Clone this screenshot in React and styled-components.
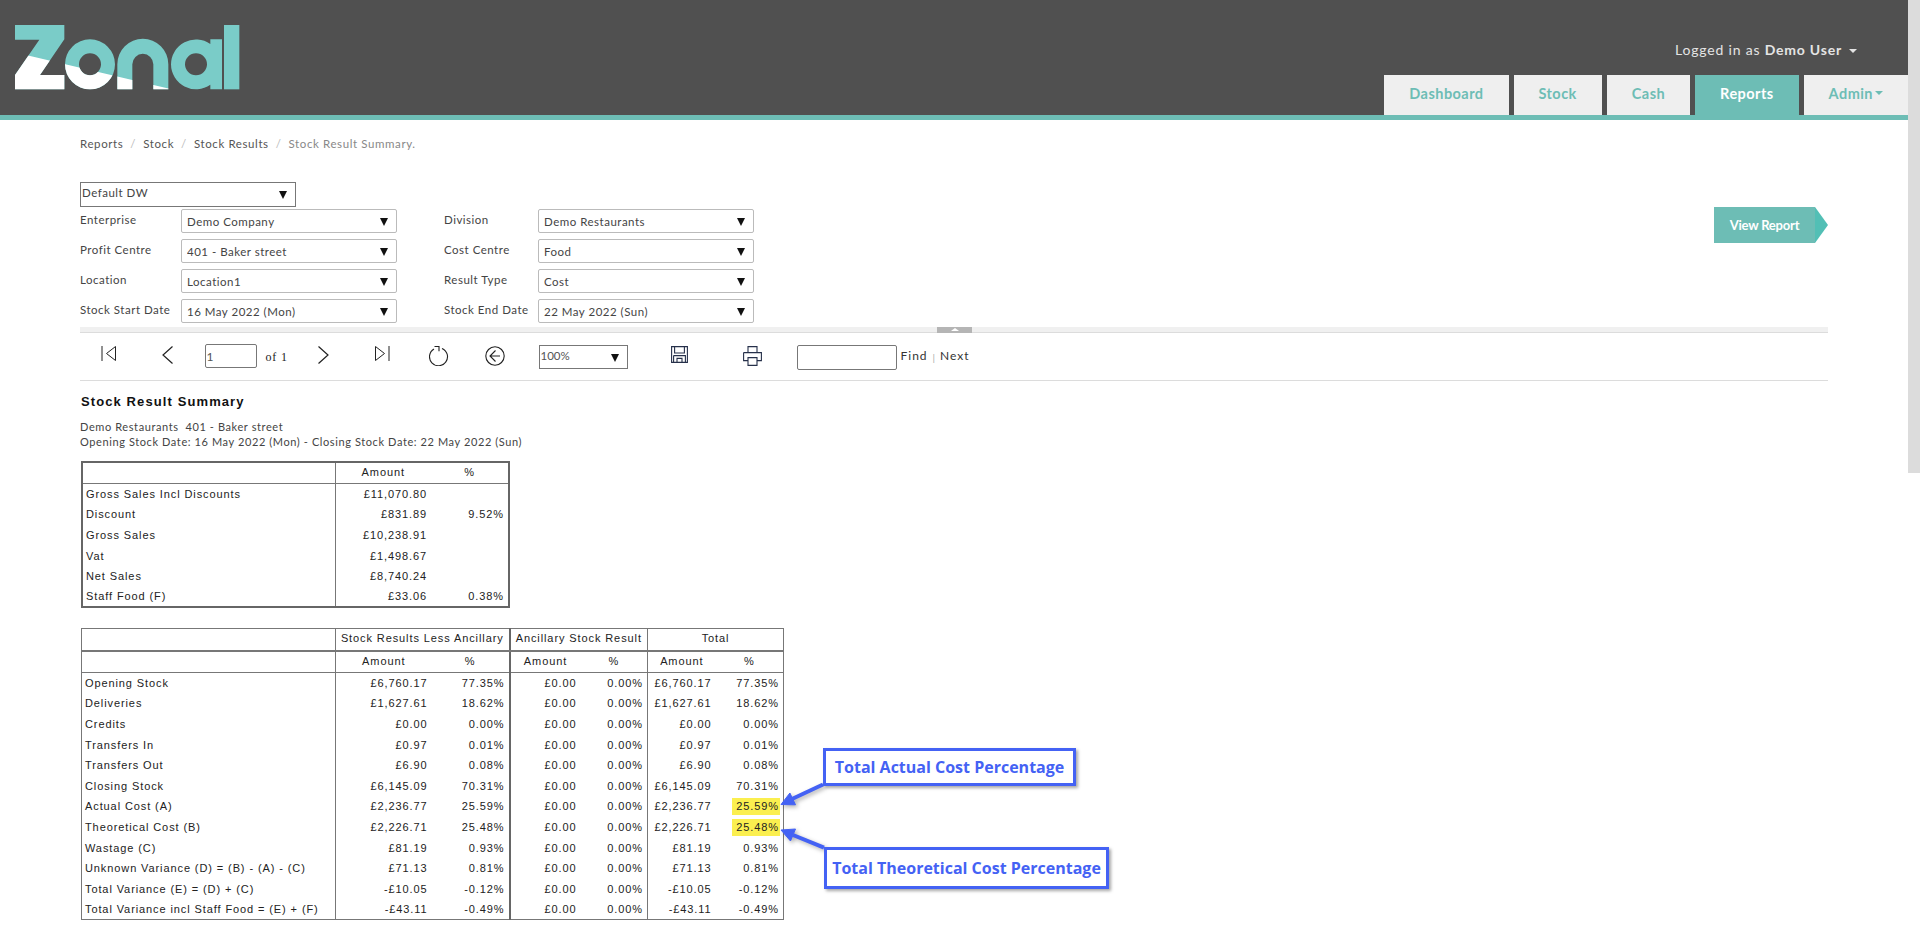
import React from "react";
import styled, { createGlobalStyle } from "styled-components";

const teal = "#6dbdb5";
const callout = "#4462f4";

const GlobalStyle = createGlobalStyle`
  html, body {
    margin: 0;
    height: 100%;
    overflow: hidden;
    background: #fff;
  }
  body {
    font-family: Lato, "Open Sans", sans-serif;
    color: #444;
  }
  #root {
    height: 100%;
  }
`;

const filterRows = [
  ["Enterprise", "Demo Company", "Division", "Demo Restaurants"],
  ["Profit Centre", "401 - Baker street", "Cost Centre", "Food"],
  ["Location", "Location1", "Result Type", "Cost"],
  ["Stock Start Date", "16 May 2022 (Mon)", "Stock End Date", "22 May 2022 (Sun)"],
];

const salesRows = [
  ["Gross Sales Incl Discounts", "£11,070.80", ""],
  ["Discount", "£831.89", "9.52%"],
  ["Gross Sales", "£10,238.91", ""],
  ["Vat", "£1,498.67", ""],
  ["Net Sales", "£8,740.24", ""],
  ["Staff Food (F)", "£33.06", "0.38%"],
];

const stockRows = [
  ["Opening Stock", "£6,760.17", "77.35%"],
  ["Deliveries", "£1,627.61", "18.62%"],
  ["Credits", "£0.00", "0.00%"],
  ["Transfers In", "£0.97", "0.01%"],
  ["Transfers Out", "£6.90", "0.08%"],
  ["Closing Stock", "£6,145.09", "70.31%"],
  ["Actual Cost (A)", "£2,236.77", "25.59%", true],
  ["Theoretical Cost (B)", "£2,226.71", "25.48%", true],
  ["Wastage (C)", "£81.19", "0.93%"],
  ["Unknown Variance (D) = (B) - (A) - (C)", "£71.13", "0.81%"],
  ["Total Variance (E) = (D) + (C)", "-£10.05", "-0.12%"],
  ["Total Variance incl Staff Food = (E) + (F)", "-£43.11", "-0.49%"],
];

function Logo() {
  const shapes = (
    <>
      <polygon points="15,15 163,15 163,58 90,165 163,165 163,208 15,208 15,165 88,59 15,59" />
      <path fillRule="evenodd" d="M165,133a75,75 0 1 0 150,0a75,75 0 1 0 -150,0zM207,133a33,33 0 1 1 66,0a33,33 0 1 1 -66,0z" />
      <path d="M322,208V133A76,76 0 0 1 475,133V208H430V133A31,31 0 0 0 367,133V208Z" />
      <path fillRule="evenodd" d="M483,133a75,75 0 0 1 118,-61V58H636V208H601V194A75,75 0 0 1 483,133zM525,133a33,33 0 1 0 66,0a33,33 0 1 0 -66,0z" />
      <rect x="642" y="15" width="46" height="193" />
    </>
  );
  return (
    <LogoMark viewBox="0 0 720 225" role="img" aria-label="Zonal">
      <defs>
        <clipPath id="logo-lower">
          <polygon points="0,94 720,263 720,225 0,225" />
        </clipPath>
      </defs>
      <g fill="#7accc8">{shapes}</g>
      <g fill="#fff" clipPath="url(#logo-lower)">{shapes}</g>
    </LogoMark>
  );
}

function FirstIcon() {
  return (
    <svg width="15" height="15" viewBox="0 0 15 15" fill="none" stroke="#222" strokeWidth="1">
      <path d="M1 0v15M14.5 .5L5.5 7.5l9 7z" />
    </svg>
  );
}

function LastIcon() {
  return (
    <svg width="15" height="15" viewBox="0 0 15 15" fill="none" stroke="#222" strokeWidth="1">
      <path d="M14 0v15M.5 .5l9 7-9 7z" />
    </svg>
  );
}

function PrevIcon() {
  return (
    <svg width="11" height="18" viewBox="0 0 11 18" fill="none" stroke="#222" strokeWidth="1.2">
      <path d="M10.5 .5L1 9l9.5 8.5" />
    </svg>
  );
}

function NextIcon() {
  return (
    <svg width="11" height="18" viewBox="0 0 11 18" fill="none" stroke="#222" strokeWidth="1.2">
      <path d="M.5 .5L10 9 .5 17.5" />
    </svg>
  );
}

function RefreshIcon() {
  return (
    <svg width="20" height="20" viewBox="0 0 20 20" fill="none" stroke="#222" strokeWidth="1.1">
      <path d="M13 2.4A9 9 0 1 1 5 2.9" />
      <path d="M5.5 .5h4.5v4.8" />
    </svg>
  );
}

function BackIcon() {
  return (
    <svg width="20" height="20" viewBox="0 0 20 20" fill="none" stroke="#222" strokeWidth="1.1">
      <circle cx="10" cy="10" r="9.2" />
      <path d="M10.5 4.5L5 10l5.5 5.5M5 10h10" />
    </svg>
  );
}

function SaveIcon() {
  return (
    <svg width="17" height="17" viewBox="0 0 17 17" fill="none" stroke="#26304a" strokeWidth="1.1">
      <path d="M.6 .6h15.8v15.8H.6z" />
      <path d="M3.6 .6v6.4h9.8V.6M2.6 9.6h11.8v6.8M2.6 9.6v6.8M6 16.4v-4h5v4" />
    </svg>
  );
}

function PrintIcon() {
  return (
    <svg width="19" height="20" viewBox="0 0 19 20" fill="none" stroke="#26304a" strokeWidth="1.1">
      <path d="M5 .6h9v6H5zM.6 6.6h17.8v8H14M5 14.6H.6v-8" />
      <path d="M5 11.6h9v7.8H5z" />
    </svg>
  );
}

function CalloutArrows() {
  return (
    <ArrowLayer width="50" height="75" viewBox="0 0 50 75">
      <g fill={callout} stroke={callout}>
        <line x1="45" y1="3.5" x2="14" y2="18" strokeWidth="4" />
        <polygon points="3,23.5 17.5,23.8 11.9,12" strokeWidth="1" />
        <line x1="46" y1="66.7" x2="15" y2="54" strokeWidth="4" />
        <polygon points="3,49 12.5,60 17.5,48" strokeWidth="1" />
      </g>
    </ArrowLayer>
  );
}

function Dropdown({ value, $dark }) {
  return (
    <SelectWrap>
      <Select $dark={$dark} defaultValue={value}>
        <option>{value}</option>
      </Select>
    </SelectWrap>
  );
}

export default function App() {
  return (
    <Shell>
      <GlobalStyle />
      <Page>
        <Header>
          <Logo />
          <HeaderRight>
            <UserMenu>
              Logged in as <strong>Demo User</strong>
              <Caret $spaced />
            </UserMenu>
            <Tabs>
              <Tab>Dashboard</Tab>
              <Tab>Stock</Tab>
              <Tab>Cash</Tab>
              <Tab $active>Reports</Tab>
              <Tab>
                Admin
                <Caret $teal />
              </Tab>
            </Tabs>
          </HeaderRight>
        </Header>

        <Content>
          <Breadcrumb>
            <a>Reports</a>
            <Slash>/</Slash>
            <a>Stock</a>
            <Slash>/</Slash>
            <a>Stock Results</a>
            <Slash>/</Slash>
            <Current>Stock Result Summary.</Current>
          </Breadcrumb>

          <FilterSection>
            <div>
              <Dropdown value="Default DW" $dark />
              <FilterGrid>
                {filterRows.map((row) => (
                  <React.Fragment key={row[0]}>
                    <FilterLabel>{row[0]}</FilterLabel>
                    <Dropdown value={row[1]} />
                    <FilterLabel $second>{row[2]}</FilterLabel>
                    <Dropdown value={row[3]} />
                  </React.Fragment>
                ))}
              </FilterGrid>
            </div>
            <ViewReport>View Report</ViewReport>
          </FilterSection>

          <CollapseBar>
            <CollapseHandle />
          </CollapseBar>

          <Toolbar>
            <Tool $left={21}><FirstIcon /></Tool>
            <Tool $left={46}><PrevIcon /></Tool>
            <PageInput defaultValue="1" />
            <PageCount>of 1</PageCount>
            <Tool $left={29}><NextIcon /></Tool>
            <Tool $left={46}><LastIcon /></Tool>
            <Tool $left={39}><RefreshIcon /></Tool>
            <Tool $left={36}><BackIcon /></Tool>
            <ZoomWrap>
              <ZoomSelect defaultValue="100%">
                <option>100%</option>
              </ZoomSelect>
            </ZoomWrap>
            <Tool $left={43}><SaveIcon /></Tool>
            <Tool $left={55}><PrintIcon /></Tool>
            <FindInput />
            <FindLink $left={4}>Find</FindLink>
            <FindDivider>|</FindDivider>
            <FindLink $left={0}>Next</FindLink>
          </Toolbar>

          <ReportTitle>Stock Result Summary</ReportTitle>
          <ReportMeta>
            Demo Restaurants &nbsp;401 - Baker street
            <br />
            Opening Stock Date: 16 May 2022 (Mon) - Closing Stock Date: 22 May 2022 (Sun)
          </ReportMeta>

          <SalesTable>
            <colgroup>
              <col width="253" />
              <col width="96" />
              <col width="78" />
            </colgroup>
            <thead>
              <tr>
                <HeadCell />
                <HeadCell $noRule>Amount</HeadCell>
                <HeadCell $plain>%</HeadCell>
              </tr>
            </thead>
            <tbody>
              {salesRows.map((row) => (
                <tr key={row[0]}>
                  <LabelCell>{row[0]}</LabelCell>
                  <ValueCell $noRule>{row[1]}</ValueCell>
                  <ValueCell $plain>{row[2]}</ValueCell>
                </tr>
              ))}
            </tbody>
          </SalesTable>

          <StockWrap>
            <StockTable>
              <colgroup>
                <col width="254" />
                <col width="96" />
                <col width="78" />
                <col width="71" />
                <col width="67" />
                <col width="68" />
                <col width="68" />
              </colgroup>
              <thead>
                <tr>
                  <GroupCell />
                  <GroupCell colSpan={2} $heavy>Stock Results Less Ancillary</GroupCell>
                  <GroupCell colSpan={2}>Ancillary Stock Result</GroupCell>
                  <GroupCell colSpan={2}>Total</GroupCell>
                </tr>
                <tr>
                  <HeadCell />
                  <HeadCell $noRule>Amount</HeadCell>
                  <HeadCell $heavy>%</HeadCell>
                  <HeadCell $noRule>Amount</HeadCell>
                  <HeadCell>%</HeadCell>
                  <HeadCell $noRule>Amount</HeadCell>
                  <HeadCell $plain>%</HeadCell>
                </tr>
              </thead>
              <tbody>
                {stockRows.map(([label, amount, pct, marked]) => (
                  <tr key={label}>
                    <LabelCell>{label}</LabelCell>
                    <ValueCell $noRule>{amount}</ValueCell>
                    <ValueCell $heavy>{pct}</ValueCell>
                    <ValueCell $noRule>£0.00</ValueCell>
                    <ValueCell>0.00%</ValueCell>
                    <ValueCell $noRule>{amount}</ValueCell>
                    <ValueCell $plain>
                      {marked ? <Highlight>{pct}</Highlight> : pct}
                    </ValueCell>
                  </tr>
                ))}
              </tbody>
            </StockTable>
            <CalloutArrows />
            <ActualCallout>Total Actual Cost Percentage</ActualCallout>
            <TheoreticalCallout>Total Theoretical Cost Percentage</TheoreticalCallout>
          </StockWrap>
        </Content>
      </Page>
      <ScrollTrack>
        <ScrollThumb />
      </ScrollTrack>
    </Shell>
  );
}

const Shell = styled.div`
  display: flex;
  height: 100%;
  overflow: hidden;
`;

const Page = styled.div`
  flex: 1;
  min-width: 0;
`;

const ScrollTrack = styled.div`
  width: 12px;
  flex: none;
  background: #fff;
`;

const ScrollThumb = styled.div`
  height: 473px;
  background: #dcdcdc;
`;

const Header = styled.header`
  display: flex;
  justify-content: space-between;
  box-sizing: border-box;
  height: 120px;
  background: #505050;
  border-bottom: 5px solid ${teal};
`;

const LogoMark = styled.svg`
  display: block;
  width: 240px;
  height: 75px;
  margin: 20px 0 0 10px;
`;

const HeaderRight = styled.div`
  display: flex;
  flex-direction: column;
  align-items: flex-end;
  justify-content: space-between;
`;

const UserMenu = styled.div`
  margin: 41px 51px 0 0;
  font-size: 14px;
  line-height: 18px;
  letter-spacing: 0.8px;
  color: #e4e4e4;

  strong {
    font-weight: 700;
  }
`;

const Caret = styled.span`
  display: inline-block;
  margin-left: ${(p) => (p.$spaced ? "7px" : "2px")};
  vertical-align: middle;
  border-left: 4px solid transparent;
  border-right: 4px solid transparent;
  border-top: 4px solid ${(p) => (p.$teal ? teal : "#e4e4e4")};
`;

const Tabs = styled.nav`
  display: flex;
  gap: 5px;
`;

const Tab = styled.div`
  box-sizing: border-box;
  height: 40px;
  padding: 0 25px 4px;
  display: flex;
  align-items: center;
  font-size: 14.5px;
  font-weight: 700;
  letter-spacing: 0.45px;
  color: ${(p) => (p.$active ? "#fff" : teal)};
  background: ${(p) => (p.$active ? teal : "#efefef")};
`;

const Content = styled.main`
  padding: 0 80px;
`;

const Breadcrumb = styled.div`
  display: flex;
  align-items: center;
  padding-top: 15px;
  height: 16px;
  margin-bottom: 31px;
  font-size: 11.5px;
  letter-spacing: 0.6px;
  color: #555;
`;

const Slash = styled.span`
  margin: 0 7px;
  color: #bbb;
`;

const Current = styled.span`
  color: #888;
`;

const FilterSection = styled.section`
  display: flex;
  justify-content: space-between;
  align-items: flex-start;
`;

const SelectWrap = styled.div`
  position: relative;
  width: 216px;

  &::after {
    content: "";
    position: absolute;
    top: 9px;
    right: 9px;
    border-left: 4px solid transparent;
    border-right: 4px solid transparent;
    border-top: 8px solid #111;
    pointer-events: none;
  }
`;

const Select = styled.select`
  display: block;
  box-sizing: border-box;
  width: 100%;
  height: ${(p) => (p.$dark ? "25px" : "24px")};
  padding: ${(p) => (p.$dark ? "0 1px 4px" : "0 5px")};
  appearance: none;
  background: #fff;
  border: 1px solid ${(p) => (p.$dark ? "#777" : "#bbb")};
  border-radius: ${(p) => (p.$dark ? "0" : "2px")};
  font: 11.5px Lato, sans-serif;
  letter-spacing: 0.5px;
  color: #444;
`;

const FilterGrid = styled.div`
  display: grid;
  grid-template-columns: 101px 216px 141px 216px;
  row-gap: 6px;
  margin-top: 2px;
`;

const FilterLabel = styled.label`
  padding-left: ${(p) => (p.$second ? "47px" : "0")};
  font-size: 11.5px;
  line-height: 21px;
  letter-spacing: 0.5px;
  color: #444;
  white-space: nowrap;
`;

const ViewReport = styled.button`
  position: relative;
  margin: 25px 13px 0 0;
  width: 101px;
  height: 36px;
  padding: 0;
  border: none;
  background: ${teal};
  color: #fff;
  font: 700 13px Lato, sans-serif;
  letter-spacing: -0.2px;

  &::after {
    content: "";
    position: absolute;
    left: 100%;
    top: 0;
    border-top: 18px solid transparent;
    border-bottom: 18px solid transparent;
    border-left: 13px solid #52bfb5;
  }
`;

const CollapseBar = styled.div`
  display: flex;
  justify-content: center;
  box-sizing: border-box;
  height: 6px;
  margin-top: 4px;
  background: #f0f0f0;
  border-bottom: 1px solid #dcdcdc;
`;

const CollapseHandle = styled.div`
  position: relative;
  width: 35px;
  height: 6px;
  background: #b5b5b5;

  &::after {
    content: "";
    position: absolute;
    left: 14px;
    top: 1px;
    border-left: 4px solid transparent;
    border-right: 4px solid transparent;
    border-bottom: 3px solid #fff;
  }
`;

const Toolbar = styled.div`
  display: flex;
  align-items: flex-start;
  box-sizing: border-box;
  height: 48px;
  padding-top: 11px;
  border-bottom: 1px solid #dcdcdc;
`;

const Tool = styled.span`
  display: block;
  margin-left: ${(p) => p.$left}px;
  margin-top: 2px;
  line-height: 0;
`;

const PageInput = styled.input`
  box-sizing: border-box;
  width: 52px;
  height: 24px;
  margin-left: 31.5px;
  padding: 0 1px;
  border: 1px solid #777;
  border-radius: 2px;
  font: 12px Lato, sans-serif;
  color: #555;
`;

const PageCount = styled.span`
  margin: 6px 0 0 9px;
  width: 23px;
  font: 12px "Liberation Serif", serif;
  letter-spacing: 0.8px;
  color: #222;
  white-space: nowrap;
`;

const ZoomWrap = styled.div`
  position: relative;
  margin: 1px 0 0 34px;

  &::after {
    content: "";
    position: absolute;
    top: 9px;
    right: 9px;
    border-left: 4px solid transparent;
    border-right: 4px solid transparent;
    border-top: 8px solid #111;
    pointer-events: none;
  }
`;

const ZoomSelect = styled.select`
  display: block;
  box-sizing: border-box;
  width: 89px;
  height: 24px;
  padding: 0 1px 4px;
  appearance: none;
  background: #fff;
  border: 1px solid #777;
  border-radius: 0;
  font: 11.5px Lato, sans-serif;
  color: #555;
`;

const FindInput = styled.input`
  box-sizing: border-box;
  width: 100px;
  height: 25px;
  margin: 1px 0 0 35px;
  border: 1px solid #777;
  border-radius: 2px;
`;

const FindLink = styled.span`
  margin: 4px 0 0 ${(p) => p.$left}px;
  font-size: 12px;
  letter-spacing: 1px;
  color: #333;
`;

const FindDivider = styled.span`
  margin: 7px 5px 0 5px;
  font-size: 10px;
  color: #aaa;
`;

const ReportTitle = styled.h1`
  margin: 13px 0 0 1px;
  font: 700 13px/16px "Liberation Sans", Arial, sans-serif;
  letter-spacing: 1.1px;
  color: #111;
`;

const ReportMeta = styled.p`
  margin: 8.5px 0 0;
  font-size: 11px;
  line-height: 15px;
  letter-spacing: 0.6px;
  color: #444;
`;

const BaseTable = styled.table`
  border-collapse: collapse;
  table-layout: fixed;
  border: 2px solid #666;
  font: 11px "Liberation Sans", Arial, sans-serif;
  letter-spacing: 0.9px;
  color: #222;

  td,
  th {
    padding: 0;
    font-weight: 400;
    white-space: nowrap;
    box-sizing: border-box;
  }
`;

const SalesTable = styled(BaseTable)`
  width: 427px;
  margin: 12.5px 0 0 1px;
`;

const StockWrap = styled.div`
  position: relative;
  margin: 19.5px 0 0 1px;
`;

const StockTable = styled(BaseTable)`
  width: 702px;
  border-width: 1px;
  border-color: #777;
`;

const sideRule = (p) => {
  if (p.$noRule || p.$plain) return "none";
  return p.$heavy ? "2px solid #666" : "1px solid #777";
};

const GroupCell = styled.th`
  height: 23px;
  padding-bottom: 3px !important;
  text-align: center;
  border-right: ${sideRule};
  border-left: 1px solid #777;
  border-bottom: 2px solid #777;
`;

const HeadCell = styled.th`
  height: 21.5px;
  padding-bottom: 2px !important;
  text-align: center;
  border-right: ${sideRule};
  border-bottom: 1px solid #777;
  &:first-child {
    border-right: 1px solid #777;
  }
`;

const LabelCell = styled.td`
  height: 20.6px;
  padding-left: 3px !important;
  border-right: 1px solid #777;
`;

const ValueCell = styled.td`
  text-align: right;
  padding-right: 4px !important;
  border-right: ${sideRule};
`;

const Highlight = styled.span`
  display: inline-block;
  box-sizing: border-box;
  width: 48px;
  margin-right: -1px;
  padding-right: 1px;
  line-height: 17px;
  background: #fbef4f;
`;

const ArrowLayer = styled.svg`
  position: absolute;
  left: 697px;
  top: 153px;
  overflow: visible;
  filter: drop-shadow(2px 2px 2px rgba(0, 0, 0, 0.3));
`;

const Callout = styled.div`
  position: absolute;
  display: flex;
  align-items: center;
  justify-content: center;
  box-sizing: border-box;
  background: #fff;
  border: 3px solid ${callout};
  box-shadow: 2px 2px 3px rgba(0, 0, 0, 0.35);
  font: 700 16px "Open Sans", sans-serif;
  color: ${callout};
  white-space: nowrap;
`;

const ActualCallout = styled(Callout)`
  left: 742px;
  top: 120px;
  width: 253px;
  height: 38px;
`;

const TheoreticalCallout = styled(Callout)`
  left: 743px;
  top: 219px;
  width: 285px;
  height: 42px;
`;
